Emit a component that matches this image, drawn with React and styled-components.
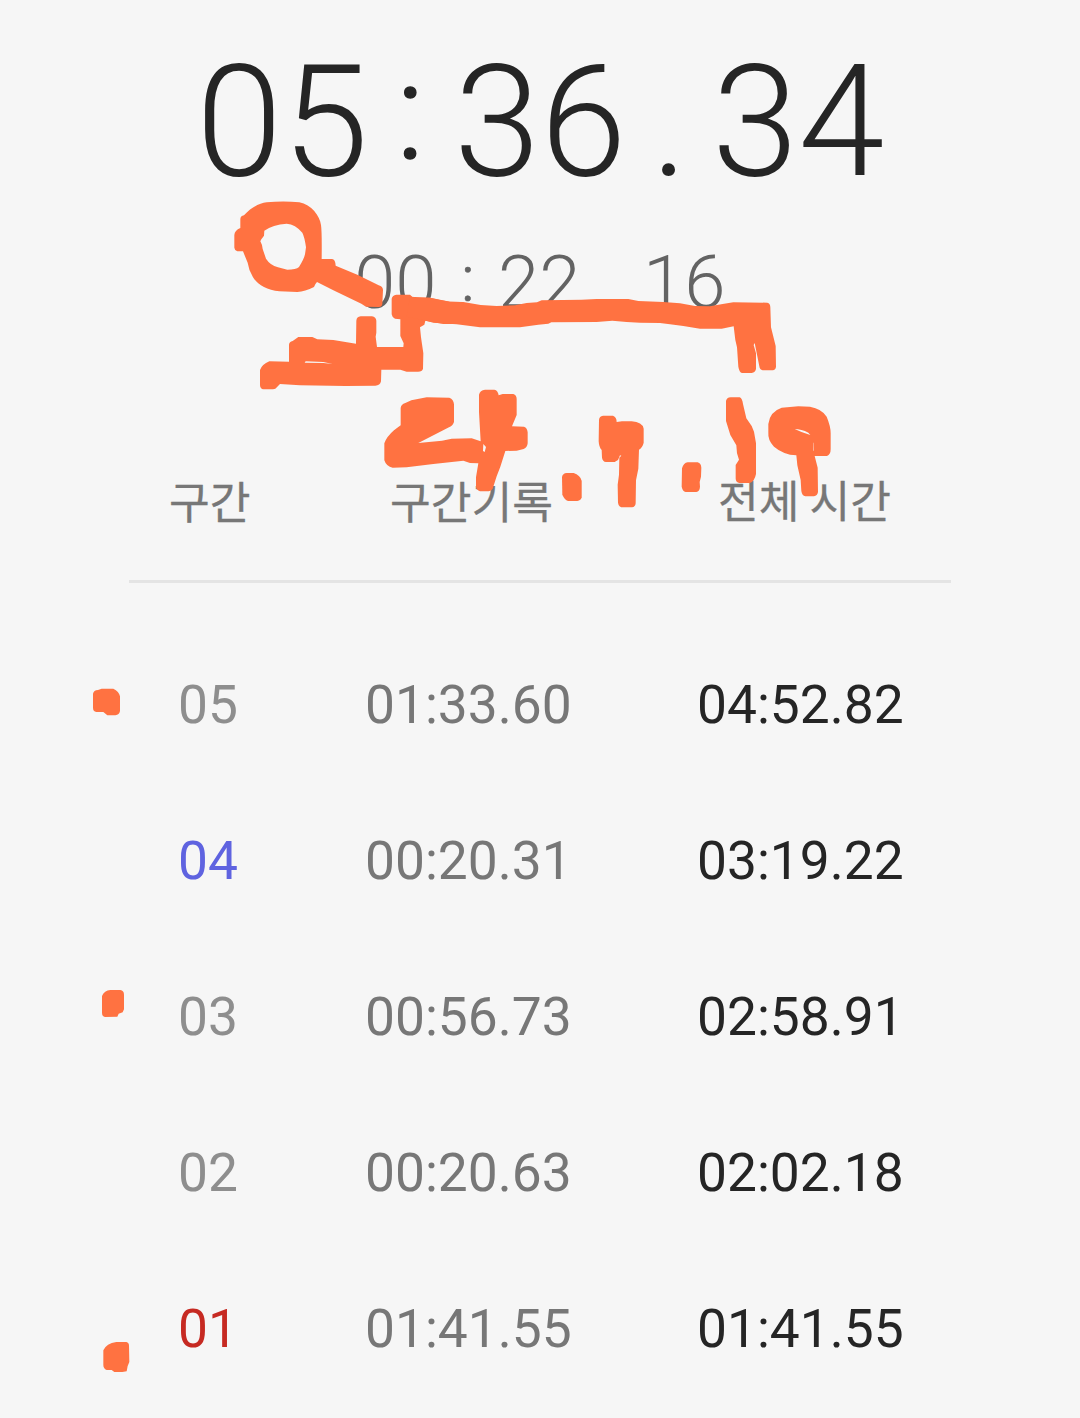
import React from 'react';
import styled, { createGlobalStyle } from 'styled-components';

const GlobalStyle = createGlobalStyle`
  * { box-sizing: border-box; }
  body { margin: 0; background: #f6f6f6; }
`;

const Screen = styled.main`
  position: relative;
  width: 1080px;
  height: 1418px;
  overflow: hidden;
  background: #f6f6f6;
  font-family: Roboto, 'Noto Sans CJK KR', sans-serif;
  display: flex;
  flex-direction: column;
`;

const Timer = styled.div`
  display: grid;
  grid-template-columns: 175px 83px 175px 83px 175px;
  justify-content: start;
  padding: 31px 0 0 196px;
  height: 212px;
  font-size: 155.5px;
  font-weight: 300;
  line-height: 183px;
  color: #252525;
  white-space: nowrap;
`;

const LapTimer = styled(Timer)`
  grid-template-columns: 84px 60px 84px 61px 84px;
  padding: 27px 0 0 354px;
  height: 248px;
  font-size: 74.4px;
  line-height: 88px;
  color: #636363;
`;

const Dot = styled.span`
  padding-left: 22px;
`;

const Colon = styled.span`
  padding-left: ${(p) => p.$inset}px;
  margin-top: ${(p) => p.$raise}px;
  font-size: 0.875em;
  -webkit-text-stroke: ${(p) => p.$stroke}px currentColor;
`;

const HeaderRow = styled.div`
  display: grid;
  grid-template-columns: 221px 328px 1fr;
  margin: 0 129px;
  padding: 8px 0 0 40px;
  height: 123px;
  border-bottom: 3px solid #e4e4e4;
  font-family: 'Noto Sans CJK KR', sans-serif;
  font-size: 44.3px;
  line-height: 64px;
  color: #777;
  -webkit-text-stroke: 0.3px #777;
  white-space: nowrap;
`;

const HeaderCell = styled.span`
  margin-top: ${(p) => p.$shift || 0}px;
`;

const Laps = styled.div`
  padding-top: 44px;
`;

const LapRow = styled.div`
  display: grid;
  grid-template-columns: 187px 332px 1fr;
  align-items: center;
  height: 156px;
  padding-left: 178px;
  font-size: 53.3px;
  line-height: 62px;
  white-space: nowrap;
`;

const LapNumber = styled.span`
  color: ${(p) => p.$color || '#8e8e8e'};
`;
const LapTime = styled.span`
  color: #777;
`;
const TotalTime = styled.span`
  color: #252525;
`;

const Ink = styled.svg`
  position: absolute;
  left: 0;
  top: 0;
  fill: #ff7241;
  pointer-events: none;
`;

const laps = [
  { no: '05', time: '01:33.60', total: '04:52.82' },
  { no: '04', time: '00:20.31', total: '03:19.22', color: '#5f63e0' },
  { no: '03', time: '00:56.73', total: '02:58.91' },
  { no: '02', time: '00:20.63', total: '02:02.18' },
  { no: '01', time: '01:41.55', total: '01:41.55', color: '#c62a22' },
];

// Marker strokes: each group is drawn at three times its final size.
const strokes = [
  {
    x: 220, y: 190,
    paths: [
      'M61 88Q61 78 72 76C96 50 120 40 140 37Q190 32 238 37C274 44 300 78 303 105Q306 125 305 207L336 207Q346 208 347 227L412 254L476 286Q489 290 489 300L487 342Q486 351 476 351L438 350L424 341L340 301L291 276Q286 281 282 291Q255 305 232 306L178 304C140 300 112 283 99 262Q86 240 83 218L69 184L52 184Q44 182 43 173L43 135Q44 121 61 114ZM124 148L121 154Q127 164 128 177L138 206Q150 225 174 232L202 239Q228 239 237 231Q252 207 255 193L258 172Q254 142 247 128Q226 103 200 101Q158 104 133 122L132 137Z',
      'M409 392Q410 380 422 379L456 379Q468 381 469 392L469 428L467 440L471 471L550 471L551 460L541 438L541 388L525 386Q516 382 515 373L515 326Q517 315 529 314L570 314L580 323L630 323L690 335L720 336L720 402L670 402L616 392L613 404L600 412L603 442L610 490L609 536Q607 545 594 545L560 545L541 539L484 539L483 574Q480 587 466 587L376 588L240 586L180 582L166 596Q160 598 150 598L130 598Q121 597 120 586L120 540Q126 523 148 514L207 515L207 464Q208 455 218 453L235 441L277 441L292 448L340 450L408 461ZM257 514L254 518L310 519L338 522L310 516Z',
    ],
  },
  {
    x: 380, y: 240,
    paths: [
      'M90 170L150 173L180 180L210 185L250 186L302 195L350 198L405 196L440 189L471 187L485 181L550 180L605 179L650 177L745 177L775 183L850 186L900 190L945 198L990 199L1028 192L1060 187L1162 188Q1171 190 1171 202L1173 262L1187 318L1188 380Q1187 390 1178 391L1148 391Q1139 389 1138 379L1124 309L1121 315L1128 340L1128 387Q1126 398 1115 399L1086 399Q1078 397 1075 380L1071 322L1066 300L1061 259L1025 266L960 266L910 258L870 253L840 249L780 248L740 246L697 242L650 246L514 247L505 251L475 254L420 262L300 262L230 253L160 248L132 241L80 230Z',
    ],
  },
  {
    x: 370, y: 380,
    paths: [
      'M92 84Q93 73 106 69L124 61L170 52L238 53Q251 58 252 73L252 126Q247 139 237 142L145 189L216 182L245 176L305 175L332 184L327 96L327 44Q330 30 345 29L373 29Q384 31 386 46L398 42L430 42Q440 45 440 57L440 105L426 139L462 140Q472 144 473 157L473 190Q472 202 461 207L440 212L406 213L391 260L380 289L368 326Q364 333 356 334L330 334Q319 331 318 318L318 292L325 250L300 249L280 242L190 252L110 262L68 263Q49 260 43 241L43 190Q50 170 72 151L92 136ZM340 192L348 201L344 216L339 213Z',
      'M576 291Q578 280 590 279L611 279Q630 285 635 302L635 352Q633 362 622 363L594 363Q584 360 577 344Z',
    ],
  },
  {
    x: 590, y: 380,
    paths: [
      'M27 120Q28 108 39 107L69 107Q80 111 80 126L96 124L125 124Q157 126 161 146L161 188Q158 202 147 209L145 266L138 301L137 370Q136 381 126 382L99 382Q86 382 84 368L83 314L87 284L88 233L94 227L90 226L84 240L74 246L48 246Q38 245 36 233L35 210Q27 202 26 184Z',
      'M276 265Q281 248 293 247L323 247Q333 250 334 263L333 290L329 306L330 320Q329 334 319 336L287 336Q278 334 275 320Z',
      'M408 63Q410 53 422 52L449 52Q457 55 459 72L469 115L485 138L492 155L498 190L498 282Q494 303 480 309L448 309Q438 307 437 296L437 255L447 239L441 220L439 196L421 165L408 123Z',
      'M535 132Q539 95 575 83L625 79L660 80Q695 86 710 110Q722 139 722 159L722 208Q722 224 711 228L674 228L683 263L684 336Q682 347 672 349L646 349Q636 347 634 333L632 300L622 256L619 226Q580 224 552 200Q533 180 535 158ZM614 147Q636 158 661 165L655 158Q634 147 614 147ZM670 188L669.5 212L671 212L671 188Z',
    ],
  },
  {
    x: 80, y: 660,
    paths: ['M39 101Q41 91 54 90L65 86L100 86Q117 94 120 109L120 153Q118 164 106 166L82 166L70 156L49 156Q39 154 39 143Z'],
  },
  {
    x: 80, y: 960,
    paths: ['M66 108Q73 91 91 90L121 90Q132 92 132 104L132 148L128 157L116 161L112 170L75 171Q66 169 66 158Z'],
  },
  {
    x: 80, y: 1290,
    paths: ['M70 181Q79 160 109 156L139 156Q147 158 147 167L148 216L143 228L140 244L127 246L103 246L95 240L80 240Q70 236 70 225Z'],
  },
];

function Annotation() {
  return (
    <Ink width="1080" height="1418" viewBox="0 0 1080 1418" aria-hidden="true">
      {strokes.map((s) => (
        <g key={`${s.x}-${s.y}`} transform={`translate(${s.x} ${s.y}) scale(${1 / 3})`}>
          {s.paths.map((d) => (
            <path key={d} d={d} fillRule="evenodd" />
          ))}
        </g>
      ))}
    </Ink>
  );
}

export default function App() {
  return (
    <>
      <GlobalStyle />
      <Screen>
        <Timer>
          <span>05</span>
          <Colon $inset={25} $raise={-11} $stroke={1.4}>:</Colon>
          <span>36</span>
          <Dot>.</Dot>
          <span>34</span>
        </Timer>
        <LapTimer>
          <span>00</span>
          <Colon $inset={23} $raise={-4} $stroke={0.6}>:</Colon>
          <span>22</span>
          <Dot>.</Dot>
          <span>16</span>
        </LapTimer>
        <HeaderRow>
          <HeaderCell>구간</HeaderCell>
          <HeaderCell>구간기록</HeaderCell>
          <HeaderCell $shift={-1.5}>전체 시간</HeaderCell>
        </HeaderRow>
        <Laps>
          {laps.map((lap) => (
            <LapRow key={lap.no}>
              <LapNumber $color={lap.color}>{lap.no}</LapNumber>
              <LapTime>{lap.time}</LapTime>
              <TotalTime>{lap.total}</TotalTime>
            </LapRow>
          ))}
        </Laps>
        <Annotation />
      </Screen>
    </>
  );
}
